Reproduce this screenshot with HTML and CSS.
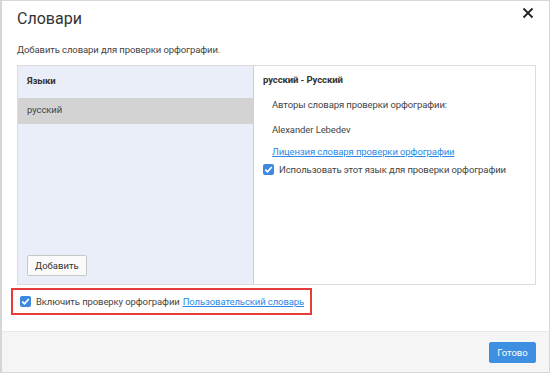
FILE: index.html
```html
<!DOCTYPE html>
<html lang="ru">
<head>
  <meta charset="UTF-8" />
  <title>Словари</title>
  <link rel="stylesheet" href="styles.css">
</head>
<body>
  <div class="dialog">
    <div class="dialog__header">
      <h1 class="dialog__title">Словари</h1>
      <button class="dialog__close" aria-label="Закрыть">
        <svg width="12" height="12" viewBox="0 0 12 12"><path d="M1.5 1.5 L10.5 10.5 M10.5 1.5 L1.5 10.5" stroke="#222" stroke-width="1.8" fill="none"/></svg>
      </button>
    </div>
    <div class="dialog__body">
      <p class="intro">Добавить словари для проверки орфографии.</p>
      <div class="dicts">
        <div class="dicts__list">
          <div class="dicts__head">Языки</div>
          <div class="dicts__item dicts__item--active">русский</div>
          <div class="dicts__spacer"></div>
          <button class="button">Добавить</button>
        </div>
        <div class="dicts__info">
          <div class="dicts__name">русский - Русский</div>
          <div class="dicts__line">Авторы словаря проверки орфографии:</div>
          <div class="dicts__line dicts__line--short">Alexander Lebedev</div>
          <div class="dicts__line dicts__line--link"><a href="#" class="link">Лицензия словаря проверки орфографии</a></div>
          <label class="check"><span class="check__box"></span>Использовать этот язык для проверки орфографии</label>
        </div>
      </div>
      <div class="enable">
        <label class="check"><span class="check__box"></span>Включить проверку орфографии</label>
        <a href="#" class="link">Пользовательский словарь</a>
      </div>
    </div>
    <div class="dialog__footer">
      <button class="button button--primary">Готово</button>
    </div>
  </div>
</body>
</html>
```

FILE: styles.css
```css
* {
  box-sizing: border-box;
  margin: 0;
  padding: 0;
}
body {
  font-family: Roboto, 'Noto Sans', sans-serif;
  font-size: 9.5px;
  letter-spacing: -0.1px;
  color: #444;
  background: #fff;
}
.dialog {
  width: 550px;
  height: 373px;
  border: 1px solid #d6d6d6;
  border-left-width: 2px;
  display: flex;
  flex-direction: column;
}
.dialog__header {
  display: flex;
  justify-content: space-between;
  align-items: flex-start;
  padding: 8px 14px 0 15px;
  height: 40px;
}
.dialog__title {
  font-size: 16px;
  font-weight: 400;
  letter-spacing: 0;
  color: #333;
}
.dialog__close {
  border: none;
  background: none;
  width: 14px;
  height: 14px;
  margin-top: -2px;
  cursor: pointer;
}
.dialog__body {
  flex: 1;
  padding: 0 13px 0 15px;
}
.intro {
  height: 24px;
  line-height: 18px;
}
.dicts {
  display: grid;
  grid-template-columns: 236px 1fr;
  height: 220px;
  border: 1px solid #dcdcdc;
}
.dicts__list {
  background: #eaeef8;
  border-right: 1px solid #d0d0d0;
  display: flex;
  flex-direction: column;
  align-items: flex-start;
  padding-bottom: 8px;
}
.dicts__head {
  font-weight: 700;
  color: #333;
  height: 32px;
  line-height: 30px;
  padding-left: 9px;
}
.dicts__item {
  align-self: stretch;
  height: 26px;
  line-height: 24px;
  padding-left: 9px;
}
.dicts__item--active {
  background: #d3d3d3;
}
.dicts__spacer {
  flex: 1;
}
.button {
  font-family: inherit;
  font-size: 9.5px;
  color: #333;
  background: #fafafa;
  border: 1px solid #c8c8c8;
  border-radius: 2px;
  height: 21px;
  padding: 0 7px;
  margin-left: 9px;
  cursor: pointer;
}
.dicts__info {
  padding: 8px 9px;
}
.dicts__name {
  font-weight: 700;
  color: #333;
  height: 22px;
}
.dicts__line {
  padding-left: 9px;
  height: 25px;
  line-height: 18px;
}
.dicts__line--short {
  height: 22px;
}
.dicts__line--link {
  height: 21px;
}
.link {
  color: #2a8ae6;
  text-decoration: underline;
}
.check {
  display: flex;
  align-items: center;
  gap: 5px;
}
.check__box {
  flex: none;
  width: 11px;
  height: 11px;
  border-radius: 2px;
  background: #3c8ae0 url("data:image/svg+xml,%3Csvg xmlns='http://www.w3.org/2000/svg' viewBox='0 0 11 11'%3E%3Cpath d='M2.3 5.6 L4.5 7.8 L8.8 3' stroke='white' stroke-width='1.7' fill='none'/%3E%3C/svg%3E") no-repeat center;
}
.enable {
  display: inline-flex;
  align-items: center;
  gap: 3px;
  margin: 3px 0 0 -6px;
  height: 27px;
  padding: 0 6px 0 7px;
  border: 2px solid #e53c3c;
}
.dialog__footer {
  height: 41px;
  background: #f5f5f5;
  border-top: 1px solid #e8e8e8;
  display: flex;
  justify-content: flex-end;
  align-items: center;
  padding-right: 13px;
}
.button--primary {
  background: #3d8fe2;
  border-color: #3d8fe2;
  color: #fff;
  height: 21px;
  width: 47px;
  padding: 0;
}
```
